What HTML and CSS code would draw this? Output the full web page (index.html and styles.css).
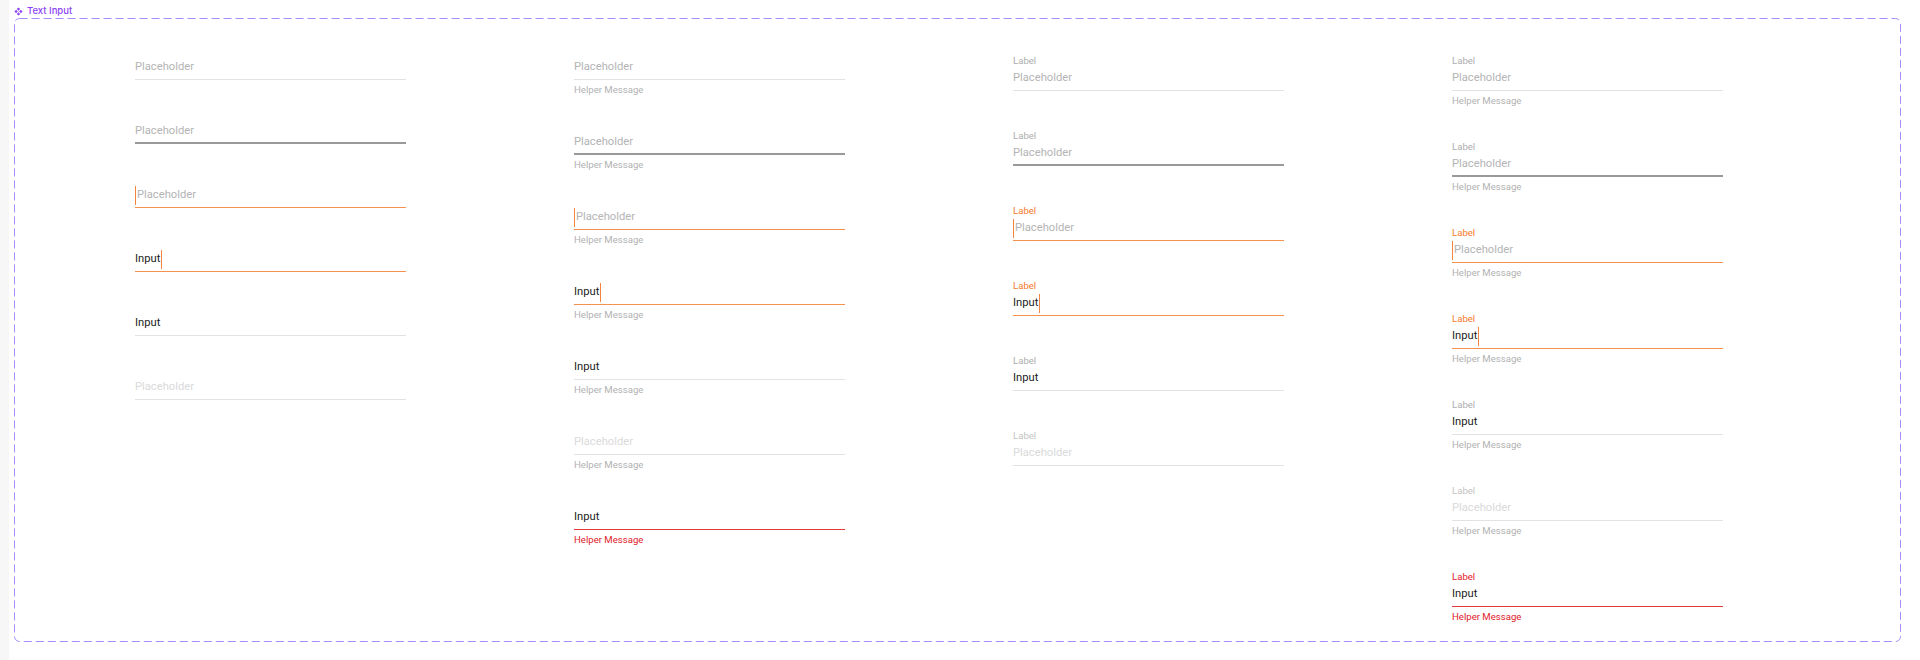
FILE: index.html
```html
<!DOCTYPE html>
<html lang="en">
<head>
    <meta charset="UTF-8">
    <meta name="viewport" content="width=device-width, initial-scale=1.0">
    <title>Text Input</title>
    <link rel="stylesheet" href="styles.css">
</head>
<body>
    <div class="frame-title">
        <svg class="component-icon" viewBox="0 0 12 12" width="9" height="9">
            <path d="M6 0.6 L8.2 2.8 L6 5 L3.8 2.8Z M6 7 L8.2 9.2 L6 11.4 L3.8 9.2Z M2.8 3.8 L5 6 L2.8 8.2 L0.6 6Z M9.2 3.8 L11.4 6 L9.2 8.2 L7 6Z" fill="#8b43f5"/>
        </svg>
        Text Input
    </div>

    <div class="frame">
        <svg class="frame-border" width="1887" height="624">
            <rect x="0.5" y="0.5" width="1886" height="623" rx="5" ry="5" fill="none" stroke="#a78cff" stroke-width="1" stroke-dasharray="8 4"/>
        </svg>

        <div class="variants">
            <!-- plain -->
            <div class="column col-plain">
                <div class="text-input">
                    <div class="ti-field"><span class="ti-placeholder">Placeholder</span></div>
                </div>
                <div class="text-input is-hover">
                    <div class="ti-field"><span class="ti-placeholder">Placeholder</span></div>
                </div>
                <div class="text-input is-focus">
                    <div class="ti-field"><span class="caret"></span><span class="ti-placeholder">Placeholder</span></div>
                </div>
                <div class="text-input is-focus">
                    <div class="ti-field"><span class="ti-value">Input</span><span class="caret"></span></div>
                </div>
                <div class="text-input">
                    <div class="ti-field"><span class="ti-value">Input</span></div>
                </div>
                <div class="text-input is-disabled">
                    <div class="ti-field"><span class="ti-placeholder">Placeholder</span></div>
                </div>
            </div>

            <!-- helper -->
            <div class="column col-helper">
                <div class="text-input">
                    <div class="ti-field"><span class="ti-placeholder">Placeholder</span></div>
                    <div class="ti-helper">Helper Message</div>
                </div>
                <div class="text-input is-hover">
                    <div class="ti-field"><span class="ti-placeholder">Placeholder</span></div>
                    <div class="ti-helper">Helper Message</div>
                </div>
                <div class="text-input is-focus">
                    <div class="ti-field"><span class="caret"></span><span class="ti-placeholder">Placeholder</span></div>
                    <div class="ti-helper">Helper Message</div>
                </div>
                <div class="text-input is-focus">
                    <div class="ti-field"><span class="ti-value">Input</span><span class="caret"></span></div>
                    <div class="ti-helper">Helper Message</div>
                </div>
                <div class="text-input">
                    <div class="ti-field"><span class="ti-value">Input</span></div>
                    <div class="ti-helper">Helper Message</div>
                </div>
                <div class="text-input is-disabled">
                    <div class="ti-field"><span class="ti-placeholder">Placeholder</span></div>
                    <div class="ti-helper">Helper Message</div>
                </div>
                <div class="text-input is-error">
                    <div class="ti-field"><span class="ti-value">Input</span></div>
                    <div class="ti-helper">Helper Message</div>
                </div>
            </div>

            <!-- label -->
            <div class="column col-label">
                <div class="text-input">
                    <div class="ti-label">Label</div>
                    <div class="ti-field"><span class="ti-placeholder">Placeholder</span></div>
                </div>
                <div class="text-input is-hover">
                    <div class="ti-label">Label</div>
                    <div class="ti-field"><span class="ti-placeholder">Placeholder</span></div>
                </div>
                <div class="text-input is-focus">
                    <div class="ti-label">Label</div>
                    <div class="ti-field"><span class="caret"></span><span class="ti-placeholder">Placeholder</span></div>
                </div>
                <div class="text-input is-focus">
                    <div class="ti-label">Label</div>
                    <div class="ti-field"><span class="ti-value">Input</span><span class="caret"></span></div>
                </div>
                <div class="text-input">
                    <div class="ti-label">Label</div>
                    <div class="ti-field"><span class="ti-value">Input</span></div>
                </div>
                <div class="text-input is-disabled">
                    <div class="ti-label">Label</div>
                    <div class="ti-field"><span class="ti-placeholder">Placeholder</span></div>
                </div>
            </div>

            <!-- label + helper -->
            <div class="column col-full">
                <div class="text-input">
                    <div class="ti-label">Label</div>
                    <div class="ti-field"><span class="ti-placeholder">Placeholder</span></div>
                    <div class="ti-helper">Helper Message</div>
                </div>
                <div class="text-input is-hover">
                    <div class="ti-label">Label</div>
                    <div class="ti-field"><span class="ti-placeholder">Placeholder</span></div>
                    <div class="ti-helper">Helper Message</div>
                </div>
                <div class="text-input is-focus">
                    <div class="ti-label">Label</div>
                    <div class="ti-field"><span class="caret"></span><span class="ti-placeholder">Placeholder</span></div>
                    <div class="ti-helper">Helper Message</div>
                </div>
                <div class="text-input is-focus">
                    <div class="ti-label">Label</div>
                    <div class="ti-field"><span class="ti-value">Input</span><span class="caret"></span></div>
                    <div class="ti-helper">Helper Message</div>
                </div>
                <div class="text-input">
                    <div class="ti-label">Label</div>
                    <div class="ti-field"><span class="ti-value">Input</span></div>
                    <div class="ti-helper">Helper Message</div>
                </div>
                <div class="text-input is-disabled">
                    <div class="ti-label">Label</div>
                    <div class="ti-field"><span class="ti-placeholder">Placeholder</span></div>
                    <div class="ti-helper">Helper Message</div>
                </div>
                <div class="text-input is-error">
                    <div class="ti-label">Label</div>
                    <div class="ti-field"><span class="ti-value">Input</span></div>
                    <div class="ti-helper">Helper Message</div>
                </div>
            </div>
        </div>
    </div>
</body>
</html>
```

FILE: styles.css
```css
    body {
        margin: 0;
        font-family: Roboto, 'Liberation Sans', sans-serif;
        background: linear-gradient(to right, #f7f7f7 9px, #ffffff 9px);
        width: 1920px;
        height: 660px;
        overflow: hidden;
    }
    .frame-title {
        box-sizing: border-box;
        height: 18px;
        padding: 4px 0 0 14px;
        display: flex;
        align-items: center;
        gap: 4px;
        font-family: Inter, 'Noto Sans', sans-serif;
        font-size: 9.5px;
        font-weight: 500;
        line-height: 14px;
        color: #8b43f5;
    }
    .component-icon {
        display: block;
    }
    .frame {
        position: relative;
        box-sizing: border-box;
        width: 1887px;
        height: 624px;
        margin-left: 14px;
        padding: 37px 0 0 121px;
    }
    .frame-border {
        position: absolute;
        top: 0;
        left: 0;
        pointer-events: none;
    }
    .variants {
        display: grid;
        grid-template-columns: repeat(4, 271px);
        column-gap: 168px;
        align-items: start;
    }
    .column {
        display: flex;
        flex-direction: column;
    }
    .col-plain, .col-label {
        gap: 39px;
    }
    .col-helper, .col-full {
        gap: 34px;
    }

    /* text input component */
    .text-input {
        display: flex;
        flex-direction: column;
    }
    .ti-label {
        height: 11px;
        font-size: 9.6px;
        line-height: 11px;
        color: #aeaeae;
    }
    .ti-field {
        box-sizing: border-box;
        height: 25px;
        display: flex;
        align-items: center;
        border-bottom: 1px solid #e2e2e2;
        font-size: 11.2px;
        line-height: 16px;
    }
    .ti-placeholder {
        color: #b4b4b4;
    }
    .ti-value {
        color: #1c1c1c;
    }
    .ti-helper {
        margin-top: 4px;
        height: 12px;
        font-size: 9.6px;
        line-height: 12px;
        color: #b2b2b2;
    }
    .caret {
        width: 1px;
        height: 19px;
        background-color: #f5843c;
        margin: 0 1px 0 0;
    }
    .ti-value + .caret {
        margin: 0 0 0 1px;
    }

    .is-hover .ti-field {
        border-bottom: 2px solid #999999;
    }
    .is-focus .ti-field {
        border-bottom: 1px solid #f5914f;
    }
    .is-focus .ti-label {
        color: #f57a2c;
    }
    .is-disabled .ti-placeholder {
        color: #dadada;
    }
    .is-disabled .ti-label {
        color: #c4c4c4;
    }
    .is-error .ti-field {
        border-bottom: 1px solid #e5383b;
    }
    .is-error .ti-label,
    .is-error .ti-helper {
        color: #e0202a;
    }
```
